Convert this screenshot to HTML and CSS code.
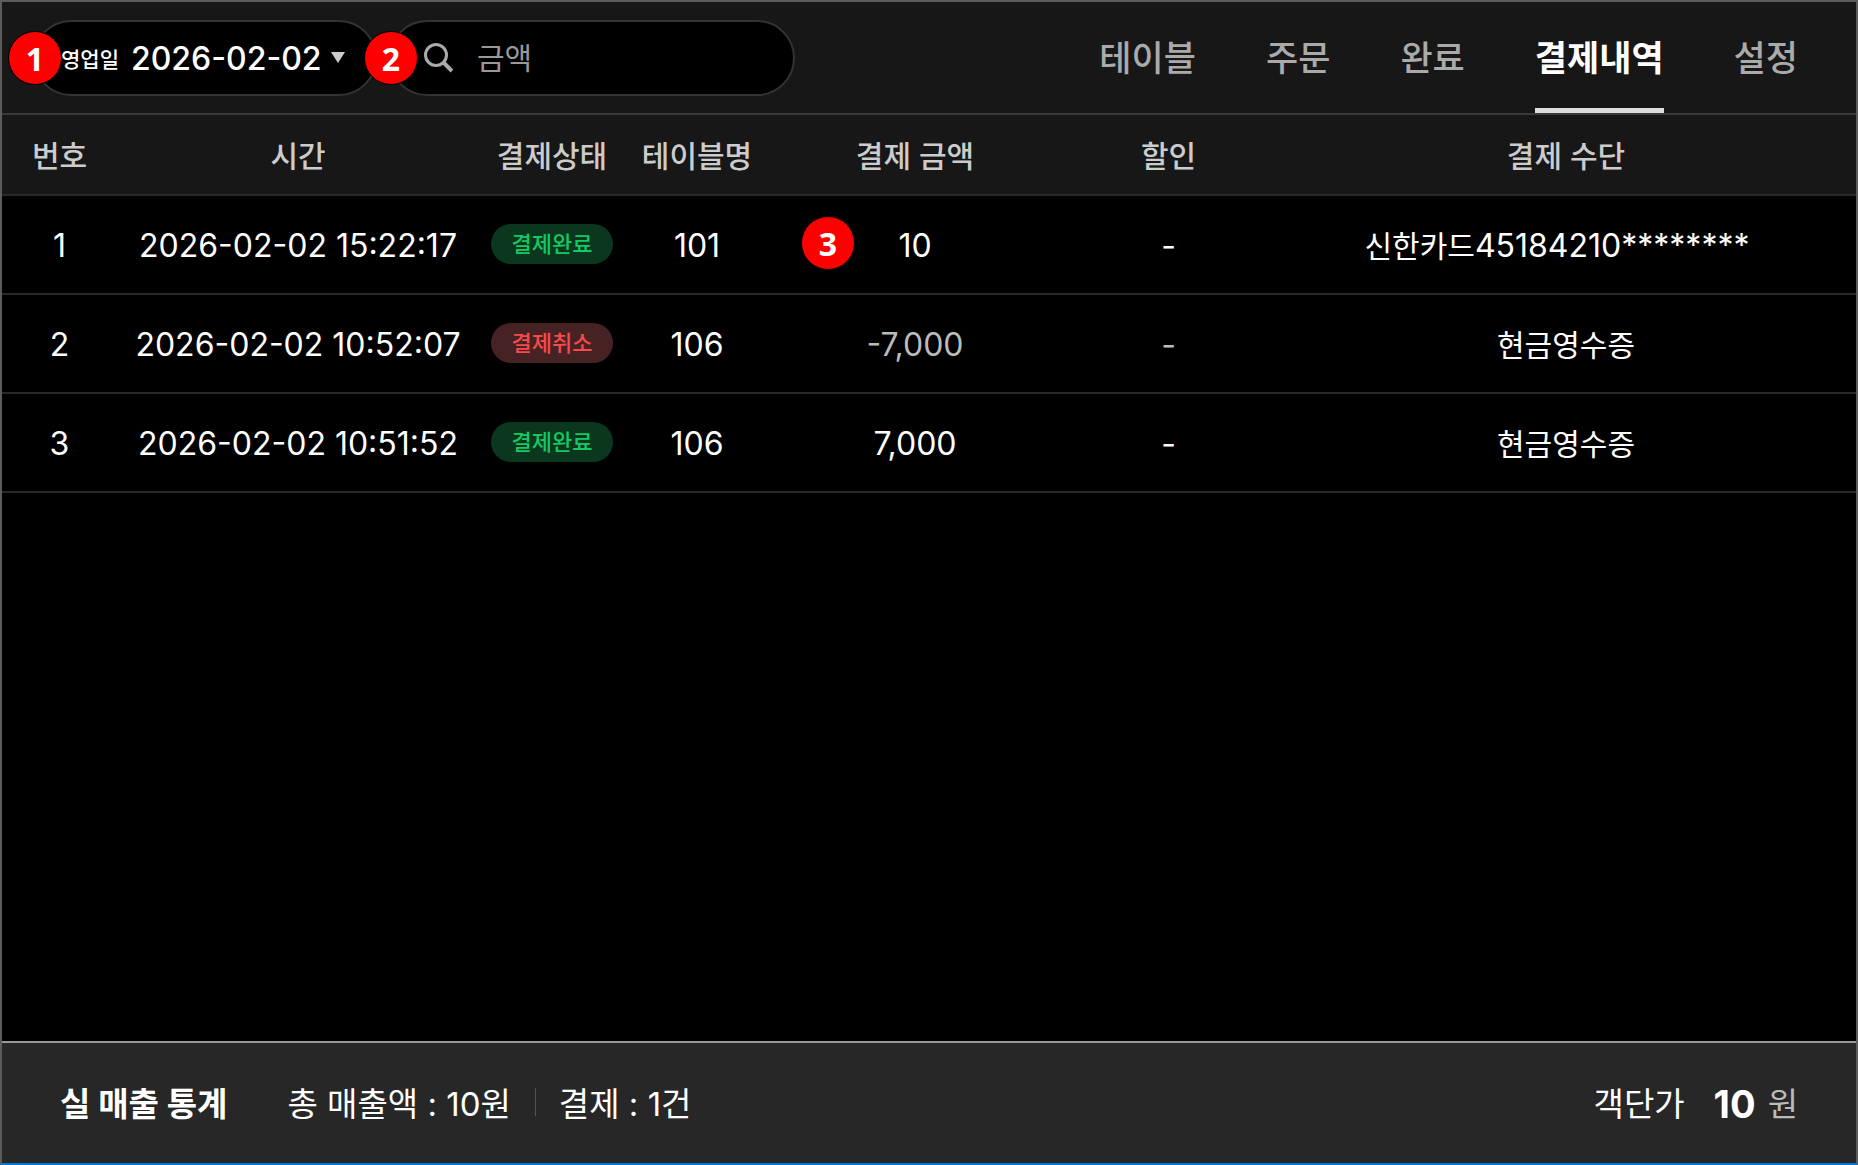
FILE: index.html
```html
<!DOCTYPE html>
<html lang="ko">
<head>
    <meta charset="UTF-8">
    <title>결제내역</title>
    <link rel="stylesheet" href="styles.css">
</head>
<body>
    <div class="wrapper">
        <header class="header">
            <div class="pill datePill">
                <span class="mark">1</span>
                <label for="bizDate">영업일</label>
                <select id="bizDate">
                    <option>2026-02-02</option>
                </select>
                <svg class="arrow" width="14" height="11" viewBox="0 0 14 11"><path d="M0 0h14L7 11z" fill="#ccc"/></svg>
            </div>
            <div class="pill searchPill">
                <span class="mark">2</span>
                <label for="amount" aria-label="금액">
                    <svg width="30" height="30" viewBox="0 0 30 30" fill="none" stroke="#aaa" stroke-width="3"><circle cx="13" cy="12" r="10.5"/><path d="M20 19l9 9" stroke-width="4"/></svg>
                </label>
                <input type="text" id="amount" placeholder="금액">
            </div>
            <nav class="nav">
                <a href="#">테이블</a>
                <a href="#">주문</a>
                <a href="#">완료</a>
                <a href="#" class="active">결제내역</a>
                <a href="#">설정</a>
            </nav>
        </header>
        <main class="content">
            <table class="payList">
                <colgroup>
                    <col class="colNo">
                    <col class="colTime">
                    <col class="colState">
                    <col class="colTable">
                    <col class="colPrice">
                    <col class="colSale">
                    <col>
                </colgroup>
                <thead>
                    <tr>
                        <th>번호</th>
                        <th>시간</th>
                        <th>결제상태</th>
                        <th>테이블명</th>
                        <th>결제 금액</th>
                        <th>할인</th>
                        <th>결제 수단</th>
                    </tr>
                </thead>
                <tbody>
                    <tr>
                        <td>1</td>
                        <td>2026-02-02 15:22:17</td>
                        <td><span class="state done">결제완료</span></td>
                        <td>101</td>
                        <td class="price"><span class="mark">3</span>10</td>
                        <td>-</td>
                        <td><span class="kr">신한카드</span>45184210********&nbsp;&nbsp;</td>
                    </tr>
                    <tr class="canceled">
                        <td>2</td>
                        <td>2026-02-02 10:52:07</td>
                        <td><span class="state cancel">결제취소</span></td>
                        <td>106</td>
                        <td class="price">-7,000</td>
                        <td class="sale">-</td>
                        <td><span class="kr">현금영수증</span></td>
                    </tr>
                    <tr>
                        <td>3</td>
                        <td>2026-02-02 10:51:52</td>
                        <td><span class="state done">결제완료</span></td>
                        <td>106</td>
                        <td class="price">7,000</td>
                        <td>-</td>
                        <td><span class="kr">현금영수증</span></td>
                    </tr>
                </tbody>
            </table>
        </main>
        <footer class="footer">
            <strong class="title">실 매출 통계</strong>
            <span class="total">총 매출액 : 10원</span>
            <span class="count">결제 : 1건</span>
            <span class="average">객단가</span>
            <strong class="averageNum">10</strong>
            <span class="unit">원</span>
        </footer>
    </div>
</body>
</html>
```

FILE: styles.css
```css
* {
    padding: 0;
    margin: 0;
    box-sizing: border-box;
}
body {
    background: #000;
    color: #fff;
    font-family: Inter, "Noto Sans CJK KR", sans-serif;
}
.wrapper {
    display: flex;
    flex-direction: column;
    min-height: 100vh;
    border: 2px solid #5c5c5c;
    border-bottom-color: #0078d7;
}

/* header */
.header {
    display: flex;
    align-items: center;
    height: 113px;
    padding: 0 58px 0 31px;
    background: #171717;
    border-bottom: 2px solid #3a3a3a;
}
.pill {
    position: relative;
    display: flex;
    align-items: center;
    height: 76px;
    border: 2px solid #333;
    border-radius: 38px;
    background: #000;
}
.datePill {
    width: 344px;
    padding-left: 26px;
    margin-right: 12px;
}
.datePill label {
    font-size: 21px;
    font-weight: 500;
    margin-right: 12px;
}
.datePill select {
    padding-top: 2px;
    border: none;
    outline: none;
    appearance: none;
    background: none;
    color: #fff;
    font: 500 32px Inter, sans-serif;
}
.arrow {
    margin-left: 9px;
}
.searchPill {
    width: 406px;
    padding: 0 32px;
}
.searchPill label {
    display: flex;
    margin-right: 24px;
}
.searchPill input {
    width: 100%;
    border: none;
    outline: none;
    background: none;
    color: #fff;
    font-family: inherit;
    font-size: 30px;
}
.searchPill input::placeholder {
    color: #999;
}
.mark {
    position: absolute;
    width: 54px;
    height: 54px;
    border: 1px solid #000;
    border-radius: 50%;
    background: #f00;
    color: #fff;
    text-align: center;
    font: bold 32px/54px "Noto Sans", sans-serif;
}
.pill .mark {
    top: 9px;
    left: -27px;
}
.nav {
    display: flex;
    align-self: stretch;
    gap: 70px;
    margin-left: auto;
}
.nav a {
    position: relative;
    color: #aaa;
    font-size: 35px;
    font-weight: 500;
    line-height: 112px;
    text-decoration: none;
    white-space: nowrap;
}
.nav .active {
    color: #fff;
    font-weight: bold;
}
.nav .active::after {
    content: "";
    position: absolute;
    left: 0;
    right: 0;
    bottom: 0;
    height: 5px;
    background: #ddd;
}

/* table */
.content {
    flex: 1;
}
.payList {
    width: 100%;
    table-layout: fixed;
    border-collapse: collapse;
    text-align: center;
}
.colNo {
    width: 115px;
}
.colTime {
    width: 362px;
}
.colState {
    width: 146px;
}
.colTable {
    width: 144px;
}
.colPrice {
    width: 292px;
}
.colSale {
    width: 215px;
}
.payList tr {
    border-bottom: 2px solid #292929;
}
.payList th {
    height: 80px;
    padding-top: 2px;
    background: #171717;
    color: #ccc;
    font-size: 30px;
    font-weight: 500;
    line-height: 40px;
}
.payList td {
    height: 99px;
    padding-top: 2px;
    font-size: 32px;
    line-height: 48px;
    white-space: nowrap;
}
.payList .kr {
    font-size: 30px;
}
.payList .price {
    position: relative;
}
.price .mark {
    top: 20px;
    left: 32px;
}
.canceled .price,
.canceled .sale {
    color: #bbb;
}
.state {
    display: inline-block;
    width: 122px;
    margin: 2px 0;
    border-radius: 20px;
    font-size: 22px;
    font-weight: 500;
    line-height: 40px;
    vertical-align: top;
}
.done {
    background: #0b371e;
    color: #14c964;
}
.cancel {
    background: #472224;
    color: #fb4848;
}

/* footer */
.footer {
    display: flex;
    align-items: center;
    height: 122px;
    padding: 2px 58px 0;
    border-top: 2px solid #999;
    background: #272727;
    font-size: 33px;
    line-height: 48px;
    white-space: nowrap;
}
.footer .title {
    margin-right: 60px;
}
.footer .count {
    position: relative;
    margin-left: 48px;
}
.footer .count::before {
    content: "";
    position: absolute;
    left: -24px;
    top: 8px;
    width: 1px;
    height: 28px;
    background: #555;
}
.average {
    margin-left: auto;
}
.averageNum {
    margin: 0 12px 0 29px;
    font-size: 38px;
}
.unit {
    color: #bbb;
}
```
